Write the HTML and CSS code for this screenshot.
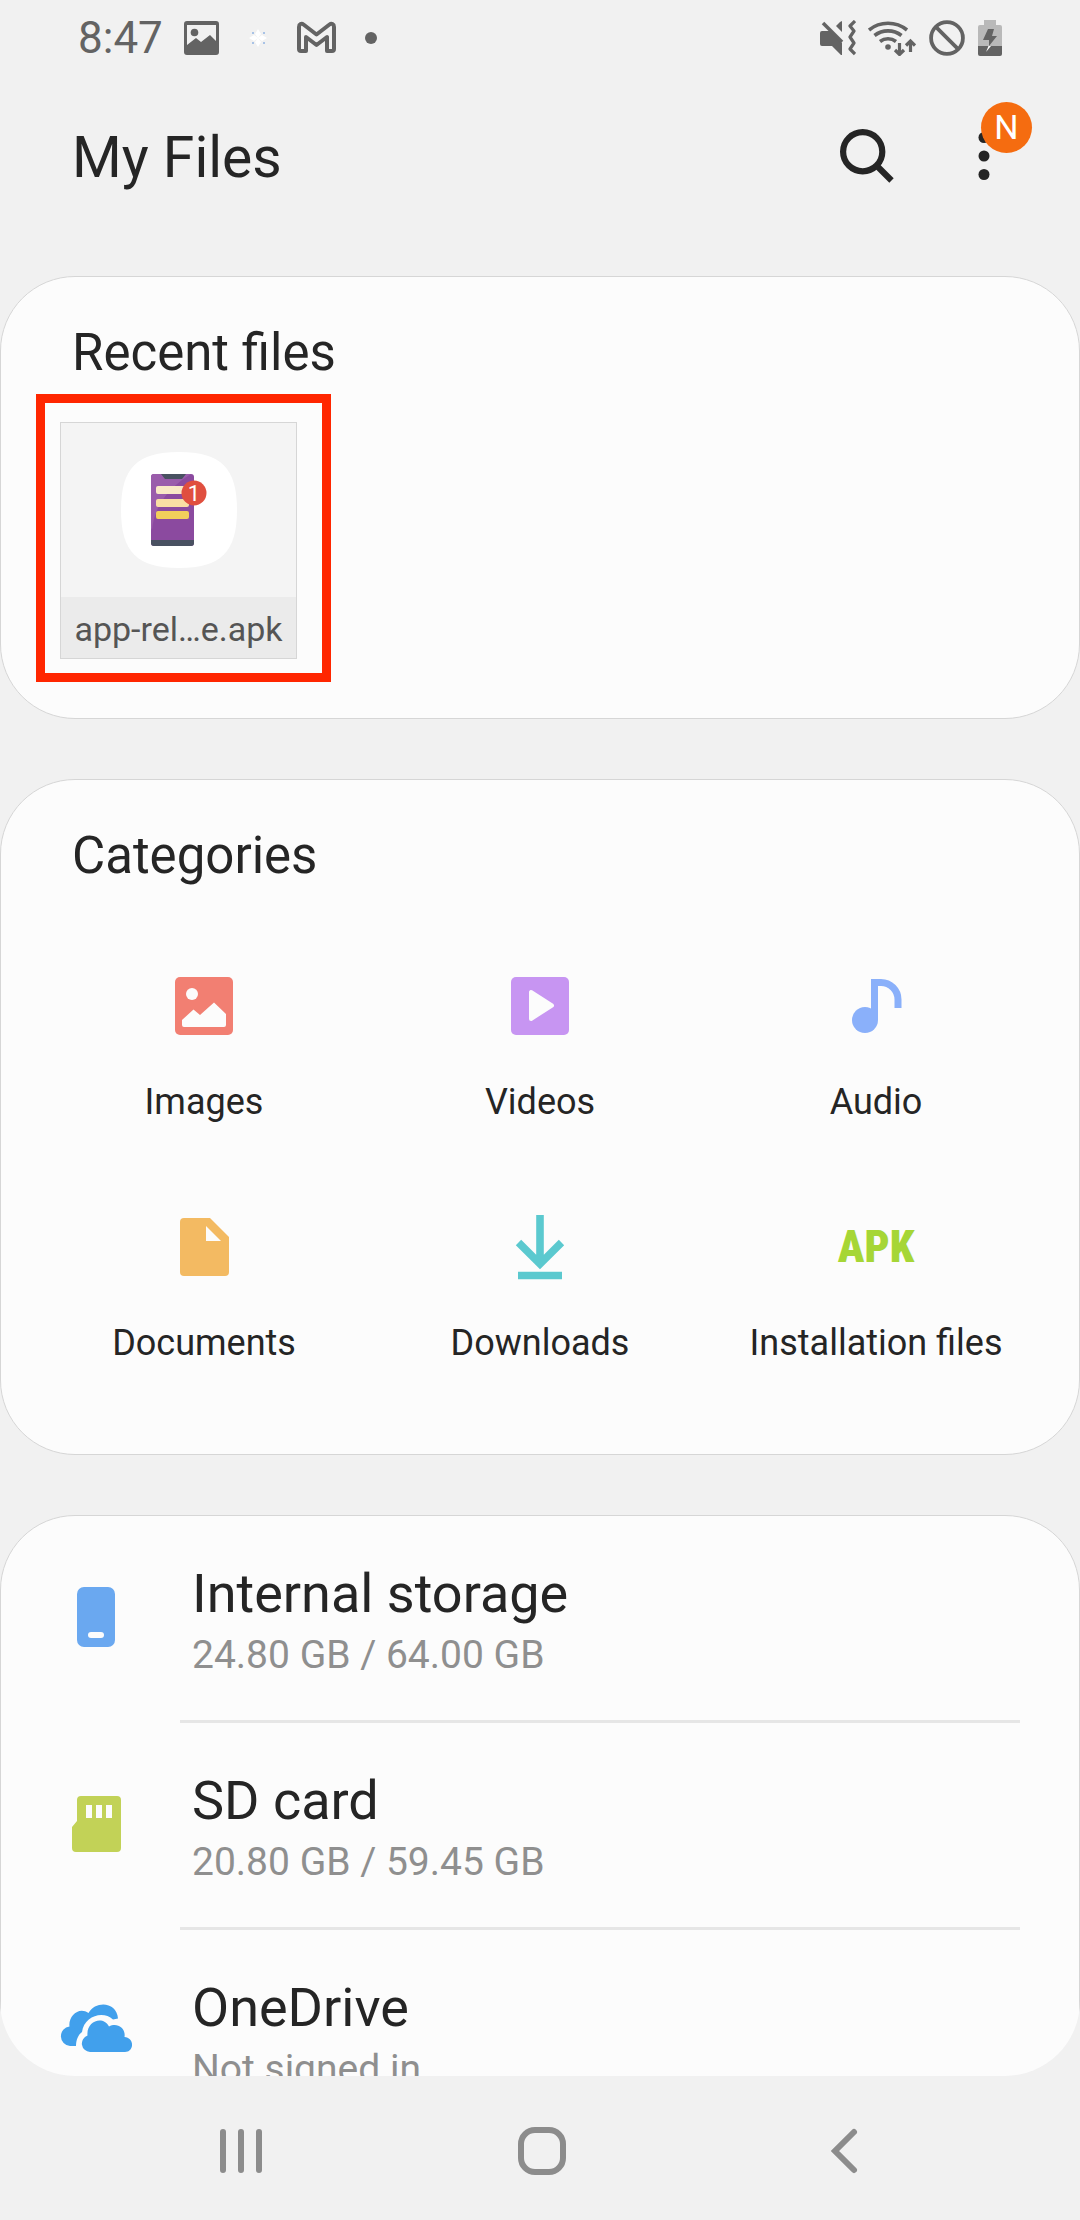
FILE: index.html
```html
<!DOCTYPE html>
<html lang="en">
<head>
<meta charset="utf-8">
<meta name="viewport" content="width=device-width, initial-scale=1">
<title>My Files</title>
<link rel="stylesheet" href="styles.css">
</head>
<body>
<div class="screen">
  <div class="status">
    <div class="status-left">
      <span class="clock">8:47</span>
      <svg width="35" height="36" viewBox="0 0 35 36"><path fill="#636363" fill-rule="evenodd" d="M3 1h29a3 3 0 0 1 3 3v28a3 3 0 0 1-3 3H3a3 3 0 0 1-3-3V4a3 3 0 0 1 3-3zM3 5v20l9-7 5 4 9-7 6 6V5z"/><circle cx="10.500" cy="12.500" r="3.800" fill="#636363"/></svg>
      <svg width="20" height="36" viewBox="0 0 20 36"><path fill="#fff" d="M10 9l3 5-3 4-3-4zM10 18l3 4-3 5-3-5zM1 18l5-3 4 3-4 3zM10 18l4-3 5 3-5 3z"/><path fill="#a9c3e6" d="M4 12h2v2H4zM15 12h2v2h-2zM4 22h2v2H4zM15 22h2v2h-2z"/></svg>
      <svg width="39" height="36" viewBox="0 0 39 36"><path fill="none" stroke="#636363" stroke-width="4" stroke-linejoin="round" d="M2 7v22a2 2 0 0 0 2 2h5V17l10.500 8L30 17v14h5a2 2 0 0 0 2-2V7c0-3-2.500-4-4.500-2.500l-13 10-13-10C4.500 3 2 4 2 7z"/></svg>
      <svg width="12" height="36" viewBox="0 0 12 36"><circle cx="6" cy="18" r="6" fill="#636363"/></svg>
    </div>
    <div class="status-right">
      <svg width="36" height="36" viewBox="0 0 36 36"><path fill="#636363" d="M2 11h9L22 23v12h-1l-9-9H2a2 2 0 0 1-2-2V13a2 2 0 0 1 2-2zM22 1v11l-6-6 4-4z"/><path fill="none" stroke="#636363" stroke-width="3.600" d="M3 3l19 19"/><path fill="none" stroke="#636363" stroke-width="3.200" stroke-linejoin="round" d="M35 1l-5 5 4 5-4 6 4 6-4 6 5 5"/></svg>
      <svg width="48" height="36" viewBox="0 0 48 36"><g fill="none" stroke="#636363" stroke-width="3.600"><path d="M1 10a30 30 0 0 1 38 0M6.500 15.500a22 22 0 0 1 27 0M12 21.500a13 13 0 0 1 16 0"/><path stroke-width="3.200" d="M31.500 23v11M27 30l4.500 4.500L36 30M42.500 32V22M38 25.500l4.500-4.500 4.500 4.500"/></g><circle cx="20" cy="27" r="2.800" fill="#636363"/></svg>
      <svg width="38" height="36" viewBox="0 -1 38 38"><circle cx="19" cy="18" r="16.800" fill="none" stroke="#636363" stroke-width="4"/><path stroke="#636363" stroke-width="4" d="M7.500 6.500l23 23"/></svg>
      <svg width="24" height="36" viewBox="0 0 24 36"><path fill="#b9b9b9" d="M6 0h12v5h4a2 2 0 0 1 2 2v19H0V7a2 2 0 0 1 2-2h4z"/><path fill="#636363" d="M0 26h24v8a2 2 0 0 1-2 2H2a2 2 0 0 1-2-2z"/><path fill="#636363" d="M10 9h6l-2 7h5l-8 10V20H5z"/><path fill="#fff" d="M8 32l2.500-6H13z"/></svg>
    </div>
  </div>

  <header class="topbar">
    <h1 class="app-title">My Files</h1>
    <button class="icon-button search" aria-label="Search">
      <svg width="54" height="54" viewBox="0 0 54 54"><circle cx="22.700" cy="22.700" r="19.600" fill="none" stroke="#252525" stroke-width="6.200"/><path stroke="#252525" stroke-width="6.200" d="M36.500 36.500L51.500 51.500"/></svg>
    </button>
    <button class="icon-button more" aria-label="More options">
      <svg width="12" height="48" viewBox="0 0 12 48"><g fill="#252525"><circle cx="6" cy="5.500" r="5.500"/><circle cx="6" cy="24" r="5.500"/><circle cx="6" cy="42.500" r="5.500"/></g></svg>
      <span class="badge">N</span>
    </button>
  </header>

  <main class="content">
    <section class="card recent">
      <h2 class="card-title">Recent files</h2>
      <div class="highlight">
        <button class="file">
          <span class="thumb">
            <svg width="116" height="116" viewBox="0 0 116 116"><path fill="#fff" d="M58 0C100 0 116 16 116 58S100 116 58 116 0 100 0 58 16 0 58 0z"/><rect x="30" y="22" width="43" height="72" rx="3" fill="#8b4a9f"/><path fill="#9a5cab" d="M33 22h37Q34 44 31 78l-1-2V25a3 3 0 0 1 3-3z"/><path fill="#495161" d="M40 22h25l-4 5H44zM30 88h43v3a3 3 0 0 1-3 3H33a3 3 0 0 1-3-3z"/><rect x="35" y="34" width="33" height="8" rx="2" fill="#f9e8c6"/><rect x="35" y="47" width="33" height="8" rx="2" fill="#f9dea4"/><rect x="35" y="59" width="33" height="8" rx="2" fill="#f2cf5b"/><circle cx="73" cy="41" r="12.500" fill="#e04f3f"/><text x="73" y="49" class="thumb-count">1</text></svg>
          </span>
          <span class="file-name">app-rel…e.apk</span>
        </button>
      </div>
    </section>

    <section class="card categories">
      <h2 class="card-title">Categories</h2>
      <div class="category-grid">
        <button class="category">
          <svg width="72" height="72" viewBox="0 0 72 72"><rect x="7" y="7" width="58" height="58" rx="5" fill="#f27f72"/><circle cx="24" cy="24" r="6" fill="#fcfcfc"/><path fill="#fcfcfc" d="M14 50l11.500-10.500L32 45l14-12.500L58 44v11a2 2 0 0 1-2 2H16a2 2 0 0 1-2-2z"/></svg>
          <span>Images</span>
        </button>
        <button class="category">
          <svg width="72" height="72" viewBox="0 0 72 72"><rect x="7" y="7" width="58" height="58" rx="5" fill="#c795f2"/><path fill="#fcfcfc" stroke="#fcfcfc" stroke-width="4" stroke-linejoin="round" d="M27 22v27l21-13.500z"/></svg>
          <span>Videos</span>
        </button>
        <button class="category">
          <svg width="72" height="72" viewBox="0 0 72 72"><circle cx="25" cy="50" r="13" fill="#8ab0fa"/><path fill="none" stroke="#8ab0fa" stroke-width="7" d="M34.500 50V12.500H41a17 17 0 0 1 17 17V38"/></svg>
          <span>Audio</span>
        </button>
        <button class="category">
          <svg width="72" height="72" viewBox="0 0 72 72"><path fill="#f3ba62" d="M16 7h26l19 19v35a4 4 0 0 1-4 4H16a4 4 0 0 1-4-4V11a4 4 0 0 1 4-4z"/><path fill="#fcfcfc" d="M38 15v15h15z"/></svg>
          <span>Documents</span>
        </button>
        <button class="category">
          <svg width="72" height="72" viewBox="0 0 72 72"><path fill="none" stroke="#5bc9cf" stroke-width="7.600" d="M36 4v48M14.500 31.500L36 53l21.500-21.500M14 64.500h44"/></svg>
          <span>Downloads</span>
        </button>
        <button class="category">
          <span class="apk" aria-hidden="true">APK</span>
          <span>Installation files</span>
        </button>
      </div>
    </section>

    <section class="card storage">
      <a class="location" href="#internal">
        <svg class="location-icon" width="72" height="60" viewBox="0 0 72 60"><rect x="17" y="0" width="38" height="60" rx="7" fill="#6aa8f0"/><rect x="28" y="45" width="16" height="6" rx="3" fill="#fcfcfc"/></svg>
        <span class="location-text"><span class="location-name">Internal storage</span><span class="location-info">24.80 GB / 64.00 GB</span></span>
      </a>
      <a class="location" href="#sdcard">
        <svg class="location-icon" width="72" height="60" viewBox="0 0 72 60"><path fill="#c2d257" d="M21 2h36a4 4 0 0 1 4 4v48a4 4 0 0 1-4 4H16a4 4 0 0 1-4-4V33l5-6V6a4 4 0 0 1 4-4z"/><path fill="#fcfcfc" d="M26 11h6v13h-6zM36 11h6v13h-6zM46 11h6v13h-6z"/></svg>
        <span class="location-text"><span class="location-name">SD card</span><span class="location-info">20.80 GB / 59.45 GB</span></span>
      </a>
      <a class="location" href="#onedrive">
        <svg class="location-icon" width="72" height="52" viewBox="0 0 72 52"><path fill="#41a0ec" d="M16 42H10A9.800 9.800 0 0 1 9.500 22.500C8 12 19 2 28.500 9 36-4 57-2 58 14.500L53 15.500C43 6 24 12 22 28 18 31 16 36 16 42zM30 48a8.500 8.500 0 0 1-2.500-16.500C26 17 43 11 49 22.500 57 18 66 24 64.500 33 75 34 74 48 65 48z"/></svg>
        <span class="location-text"><span class="location-name">OneDrive</span><span class="location-info">Not signed in</span></span>
      </a>
    </section>
  </main>

  <nav class="navbar">
    <button class="nav-button" aria-label="Recent apps"><svg width="48" height="48" viewBox="0 0 48 48"><path stroke="#8c8c8c" stroke-width="6" stroke-linecap="round" d="M6 5v38M24 5v38M42 5v38"/></svg></button>
    <button class="nav-button" aria-label="Home"><svg width="48" height="48" viewBox="0 0 48 48"><rect x="3" y="3" width="42" height="42" rx="14" fill="none" stroke="#8c8c8c" stroke-width="6"/></svg></button>
    <button class="nav-button" aria-label="Back"><svg width="48" height="48" viewBox="0 0 48 48"><path fill="none" stroke="#8c8c8c" stroke-width="6" stroke-linecap="round" d="M35 5L16 24l19 19"/></svg></button>
  </nav>
</div>
</body>
</html>
```
FILE: styles.css
```css
* {
  box-sizing: border-box;
}

body {
  margin: 0;
  background: #f1f1f1;
  color: #252525;
  font-family: Roboto, "Liberation Sans", sans-serif;
}

button {
  padding: 0;
  border: 0;
  background: none;
  color: inherit;
  font: inherit;
}

svg {
  display: block;
  flex: none;
}

.screen {
  display: flex;
  flex-direction: column;
  height: 100vh;
}

/* status bar */
.status {
  display: flex;
  justify-content: space-between;
  align-items: center;
  flex: none;
  height: 76px;
  padding: 0 78px;
}

.status-left,
.status-right {
  display: flex;
  align-items: center;
}

.status-left {
  gap: 29px;
}

.status-right {
  gap: 12px;
}

.clock {
  margin-right: -8px;
  color: #636363;
  font-size: 44px;
  line-height: 52px;
}

/* title bar */
.topbar {
  display: flex;
  align-items: center;
  flex: none;
  height: 160px;
  margin-bottom: 40px;
  padding: 0 60px 0 72px;
}

.app-title {
  flex: 1;
  margin: 4px 0 0;
  font-size: 57px;
  font-weight: 400;
  line-height: 80px;
}

.icon-button {
  position: relative;
  display: flex;
  justify-content: center;
  align-items: center;
  width: 72px;
  height: 72px;
}

.search {
  margin-right: 45px;
}

.badge {
  position: absolute;
  top: -18px;
  right: -12px;
  width: 51px;
  height: 51px;
  border-radius: 50%;
  background: #f56c10;
  color: #fff;
  font-size: 34px;
  line-height: 51px;
  text-align: center;
}

/* cards */
.content {
  flex: 1;
  min-height: 0;
  overflow: hidden;
  border-radius: 0 0 75px 75px;
}

.card {
  margin-bottom: 60px;
  border: 1px solid #d6d6d6;
  border-radius: 75px;
  background: #fcfcfc;
}

.card-title {
  margin: 0;
  padding: 44px 71px 0;
  font-size: 51px;
  font-weight: 400;
  line-height: 64px;
}

/* recent files */
.recent {
  padding-bottom: 36px;
}

.highlight {
  width: fit-content;
  margin: 9px 0 0 35px;
  padding: 19px 25px 14px 15px;
  border: 9px solid #ff2600;
}

.file {
  display: flex;
  flex-direction: column;
  width: 237px;
  border: 1px solid #d6d6d6;
  background: #ebebeb;
}

.thumb {
  display: flex;
  justify-content: center;
  align-self: stretch;
  padding: 29px 0;
  background: #f4f4f4;
}

.thumb-count {
  fill: #fff;
  font-size: 22px;
  text-anchor: middle;
}

.file-name {
  align-self: stretch;
  padding-top: 3px;
  color: #555;
  font-size: 34px;
  line-height: 58px;
  text-align: center;
}

/* categories */
.categories {
  padding-bottom: 87px;
}

.category-grid {
  display: grid;
  grid-template-columns: repeat(3, 1fr);
  row-gap: 85px;
  padding: 82px 35px 0;
}

.category {
  display: flex;
  flex-direction: column;
  align-items: center;
  gap: 36px;
  font-size: 36px;
  line-height: 48px;
}

.apk {
  color: #a6d636;
  font-family: "Roboto Condensed", Roboto, sans-serif;
  font-size: 44px;
  font-weight: 900;
  line-height: 72px;
}

/* storage locations */
.location {
  display: flex;
  align-items: center;
  gap: 48px;
  padding: 0 59px;
  color: inherit;
  text-decoration: none;
}

.location-icon {
  margin-bottom: 5px;
}

.location-text {
  display: flex;
  flex: 1;
  flex-direction: column;
  padding: 46px 12px 35px;
  border-bottom: 3px solid #e6e6e6;
}

.location:last-child .location-text {
  border-bottom: 0;
}

.location-name {
  font-size: 54px;
  line-height: 64px;
}

.location-info {
  color: #8f8f8f;
  font-size: 39px;
  line-height: 59px;
}

/* navigation bar */
.navbar {
  display: grid;
  grid-template-columns: repeat(3, 1fr);
  flex: none;
  height: 144px;
  padding: 6px 86px 0 90px;
}

.nav-button {
  display: flex;
  justify-content: center;
  align-items: center;
}
```
